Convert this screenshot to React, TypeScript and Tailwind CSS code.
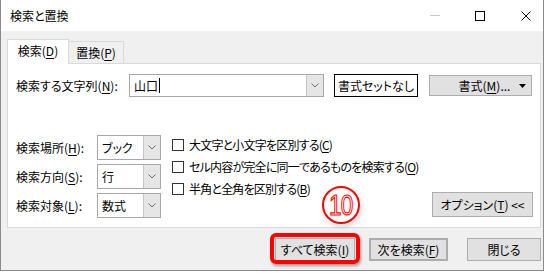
import React from "react";

function U({ c }: { c: string }) {
  return <span className="underline underline-offset-[2px] decoration-1">{c}</span>;
}

function Chevron() {
  return (
    <svg width="8" height="5" viewBox="0 0 8 5" className="block">
      <polyline points="0.5,0.5 4,4 7.5,0.5" fill="none" stroke="#707070" strokeWidth="1" />
    </svg>
  );
}

function Select({ value }: { value: string }) {
  return (
    <div className="flex h-[25px] w-[64px] border border-[#a8a8a8] bg-white">
      <div className="flex flex-1 items-center pl-[4px]">{value}</div>
      <div className="flex w-[17px] items-center justify-center border-l border-[#c4c4c4] bg-[#e6e6e6]">
        <Chevron />
      </div>
    </div>
  );
}

function Check({ children }: { children: React.ReactNode }) {
  return (
    <div className="flex h-[22px] items-center whitespace-nowrap">
      <div className="h-[12px] w-[12px] shrink-0 border border-[#333] bg-white" />
      <span className="ml-[5px] tracking-[-0.8px]">{children}</span>
    </div>
  );
}

function Btn({ w, h = "h-[23px]", children, cls = "" }: { w: string; h?: string; children: React.ReactNode; cls?: string }) {
  return (
    <div className={`flex shrink-0 items-center justify-center whitespace-nowrap border border-[#adadad] bg-[#e1e1e1] ${w} ${h} ${cls}`}>
      {children}
    </div>
  );
}

export default function App() {
  return (
    <div className="relative h-[273px] w-[549px] overflow-hidden bg-white font-['Noto_Sans_CJK_JP','Noto_Sans',sans-serif] text-[12px] leading-none text-black [font-feature-settings:'palt']">
      <div className="flex h-[271px] w-[544px] flex-col border-x border-b border-[#8a8a8a] bg-[#f0f0f0]">
        {/* title bar */}
        <div className="flex h-[31px] items-center bg-white">
          <span className="pl-[9px]">検索と置換</span>
          <div className="ml-auto flex items-center pr-[12px]">
            <div className="h-px w-[10px] bg-[#c8c8c8]" />
            <div className="ml-[35px] h-[10px] w-[10px] border border-black" />
            <svg width="10" height="10" viewBox="0 0 10 10" className="ml-[36px] block">
              <path d="M0.5 0.5 L9.5 9.5 M9.5 0.5 L0.5 9.5" stroke="#000" strokeWidth="1" />
            </svg>
          </div>
        </div>

        <div className="flex flex-col pl-[6px] pt-[8px]">
          {/* tabs */}
          <div className="flex h-[24px] items-end">
            <div className="relative z-10 -mb-px flex h-[25px] w-[62px] items-center justify-center border border-b-0 border-[#d9d9d9] bg-white pb-[2px]">
              検索(<U c="D" />)
            </div>
            <div className="flex h-[22px] w-[55px] items-center justify-center border border-b-0 border-l-0 border-[#d9d9d9] bg-[#f0f0f0]">
              置換(<U c="P" />)
            </div>
          </div>

          {/* panel */}
          <div className="flex h-[165px] w-[534px] flex-col border border-[#d9d9d9] bg-white pb-[9px] pl-[8px] pr-[7px] pt-[10px]">
            <div className="flex h-[23px] items-center">
              <div className="w-[113px] whitespace-nowrap">
                検索する文字列(<U c="N" />):
              </div>
              <div className="flex h-[23px] w-[195px] border border-[#a8a8a8] bg-white">
                <div className="flex flex-1 items-center pl-[4px]">
                  山口<span className="ml-px h-[15px] w-px bg-black" />
                </div>
                <div className="flex w-[17px] items-center justify-center border-l border-[#c4c4c4] bg-[#e6e6e6]">
                  <Chevron />
                </div>
              </div>
              <div className="ml-[10px] flex h-[23px] w-[84px] items-center justify-center whitespace-nowrap border border-black bg-white">
                書式セットなし
              </div>
              <Btn w="w-[103px] ml-[11px]" h="h-[21px]" cls="relative">
                <span className="pl-[8px]">
                  書式(<U c="M" />)...
                </span>
                <svg width="7" height="4" viewBox="0 0 7 4" className="absolute right-[5px] top-[8px] block">
                  <polygon points="0,0 7,0 3.5,4" fill="#000" />
                </svg>
              </Btn>
            </div>

            <div className="mt-[38px] flex h-[83px]">
              <div className="flex shrink-0 flex-col gap-[4px]">
                <div className="flex items-center">
                  <div className="w-[81px] whitespace-nowrap">
                    検索場所(<U c="H" />):
                  </div>
                  <Select value="ブック" />
                </div>
                <div className="flex items-center">
                  <div className="w-[81px] whitespace-nowrap">
                    検索方向(<U c="S" />):
                  </div>
                  <Select value="行" />
                </div>
                <div className="flex items-center">
                  <div className="w-[81px] whitespace-nowrap">
                    検索対象(<U c="L" />):
                  </div>
                  <Select value="数式" />
                </div>
              </div>
              <div className="-mt-px ml-[11px] flex shrink-0 flex-col">
                <Check>
                  大文字と小文字を区別する(<U c="C" />)
                </Check>
                <Check>
                  セル内容が完全に同一であるものを検索する(<U c="O" />)
                </Check>
                <Check>
                  半角と全角を区別する(<U c="B" />)
                </Check>
              </div>
              <Btn w="w-[101px] ml-auto self-end mb-px" h="h-[25px]">
                オプション(<U c="T" />) &lt;&lt;
              </Btn>
            </div>
          </div>
        </div>

        {/* bottom buttons */}
        <div className="mt-[10px] flex justify-end pr-[2px]">
          <div className="relative">
            <Btn w="w-[80px]">
              すべて検索(<U c="I" />)
            </Btn>
            <div className="absolute -bottom-[3px] -left-[5px] -right-[5px] -top-[5px] rounded-[6px] border-4 border-[#ff0000] shadow-[1px_2px_3px_rgba(0,0,0,0.35)]" />
          </div>
          <Btn w="w-[79px] ml-[14px]" cls="border-2 border-[#0078d7]">
            次を検索(<U c="F" />)
          </Btn>
          <Btn w="w-[74px] ml-[19px]">閉じる</Btn>
        </div>
      </div>

      {/* step marker */}
      <div className="absolute left-[322px] top-[186px] flex h-[38px] w-[38px] items-center justify-center rounded-full border-[2.5px] border-[#ff0000] bg-white shadow-[0_0_3px_2px_rgba(255,255,255,0.9),1px_2px_4px_rgba(0,0,0,0.35)]">
        <span className="scale-x-[0.75] font-['Liberation_Sans',sans-serif] text-[30px] font-normal tracking-[-1px] text-white [-webkit-text-stroke:1.2px_#ff0000]">
          10
        </span>
      </div>
    </div>
  );
}
